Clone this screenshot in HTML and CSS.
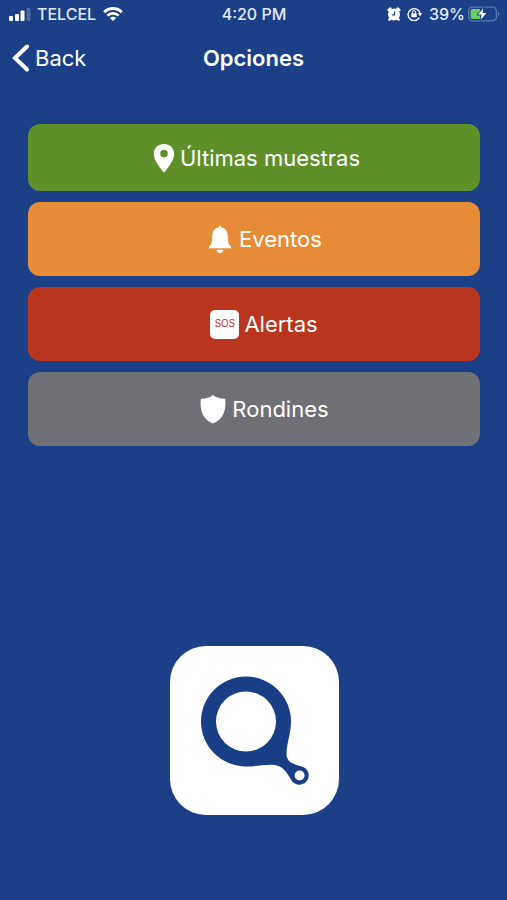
FILE: index.html
```html
<!DOCTYPE html>
<html lang="es">
<head>
<meta charset="utf-8">
<meta name="viewport" content="width=device-width, initial-scale=1">
<title>Opciones</title>
<link rel="stylesheet" href="styles.css">
</head>
<body>
<div class="status">
  <div class="status-side">
    <svg viewBox="0 0 24 14" width="24" height="14" aria-hidden="true">
      <rect x="1" y="9" width="4" height="5" rx="1"/>
      <rect x="7" y="7" width="4" height="7" rx="1"/>
      <rect x="12.500" y="3.500" width="4" height="10.500" rx="1"/>
      <rect x="18.500" y="1" width="4" height="13" rx="1" opacity=".22"/>
    </svg>
    <span>TELCEL</span>
    <svg class="wifi" viewBox="0 0 20 14" width="20" height="14" aria-hidden="true">
      <path d="M1.200 5.200a12.400 12.400 0 0 1 17.600 0" fill="none" stroke="#fff" stroke-width="2.900"/>
      <path d="M4.400 8.700a7.900 7.900 0 0 1 11.200 0" fill="none" stroke="#fff" stroke-width="2.600"/>
      <path d="M10 14 6.900 11a4.400 4.400 0 0 1 6.200 0z"/>
    </svg>
  </div>
  <span>4:20 PM</span>
  <div class="status-side status-end">
    <svg viewBox="0 0 14 14" width="14" height="14" aria-hidden="true">
      <circle cx="7" cy="7.400" r="6"/>
      <path d="M1.800 3 3.300 1.600M12.200 3 10.700 1.600M2.400 12.600l1.500-1.500M11.600 12.600l-1.500-1.500" stroke="#fff" stroke-width="2.600" stroke-linecap="round"/>
      <path d="M7.500 4.300v3.600H4.800" fill="none" stroke="#1b4087" stroke-width="1.100"/>
    </svg>
    <svg class="lock" viewBox="0 0 16 14" width="16" height="14" aria-hidden="true">
      <path d="M12.300 10.700A6 6 0 1 1 13 6.400" fill="none" stroke="#fff" stroke-width="1.400"/>
      <path d="M10.800 6h4.400L13 9.400z"/>
      <rect x="4.300" y="6.300" width="5.400" height="4" rx=".6"/>
      <path d="M5.400 6.600V5.200a1.600 1.600 0 0 1 3.200 0v1.400" fill="none" stroke="#fff"/>
    </svg>
    <span>39%</span>
    <svg viewBox="0 0 32 16" width="32" height="16" aria-hidden="true">
      <rect x=".6" y="1.100" width="27.800" height="13.800" rx="4" fill="none" stroke="#5c78ae" stroke-width="1.200"/>
      <path d="M30 5.800c2 .8 2 3.600 0 4.400z" fill="#5c78ae"/>
      <path d="M4.500 3H12v10H4.500a2 2 0 0 1-2-2V5a2 2 0 0 1 2-2z" fill="#66cf62"/>
      <path d="M16 1 9 9h4l-1 6 7.500-8.500h-4.300z" stroke="#1b4087"/>
    </svg>
  </div>
</div>
<header class="nav">
  <a class="back" href="#">
    <svg viewBox="0 0 17 30" width="17" height="30" aria-hidden="true"><path d="M15 3.500 3 15l12 11.500" fill="none" stroke="#fff" stroke-width="4" stroke-linecap="round"/></svg>
    <span>Back</span>
  </a>
  <h1>Opciones</h1>
</header>
<main>
  <div class="options">
    <button class="option samples" type="button">
      <svg viewBox="0 0 22 30" width="22" height="30" aria-hidden="true"><path fill-rule="evenodd" d="M11 1C5.200 1 .8 5.200.8 10.800.8 18 7 24 9.600 28.300q1.400 2 2.800 0C15 24 21.200 18 21.200 10.800 21.200 5.200 16.800 1 11 1zm0 5.800a3.800 3.800 0 1 1 0 7.600 3.800 3.800 0 0 1 0-7.600z"/></svg>
      <span>Últimas muestras</span>
    </button>
    <button class="option events" type="button">
      <svg viewBox="0 0 28 30" width="28" height="30" aria-hidden="true"><path d="M13 3.200C13.300.5 14.700.5 15 3.200c4.500.8 6.800 4.400 6.800 8.800 0 6.400.7 8.600 3.200 10.500v1.700H3v-1.700C5.500 20.600 6.200 18.400 6.200 12c0-4.400 2.300-8 6.800-8.800zM10.500 25.800h7c-.5 4.200-6.500 4.200-7 0z"/></svg>
      <span>Eventos</span>
    </button>
    <button class="option alerts" type="button">
      <span class="sos">SOS</span>
      <span>Alertas</span>
    </button>
    <button class="option rounds" type="button">
      <svg viewBox="0 0 28 30" width="28" height="30" aria-hidden="true"><path d="M14 1c3 2.800 7 3.600 11.500 3.800q.8 0 .8 1C27 16.500 24.500 25.500 14 29.500 3.500 25.500 1 16.500 1.700 5.800q0-1 .8-1C7 4.600 11 3.800 14 1z"/></svg>
      <span>Rondines</span>
    </button>
  </div>
  <svg class="logo" viewBox="0 0 169 169" role="img" aria-label="Logo">
    <rect width="169" height="169" rx="36"/>
    <path fill="#183f86" fill-rule="evenodd" d="M76 120.500A45 45 0 1 1 121 75.500C121 87 117 96 116.500 107.500C116.400 117 125 118.500 132 120.500A9.300 9.300 0 1 1 121 133.500C117 127 113 118.900 102 118.700C92 118.500 86 120.500 76 120.500zM76 45.500a30 30 0 1 0 0 60 30 30 0 0 0 0-60zM129.600 124.500a5 5 0 1 0 0 10 5 5 0 0 0 0-10z"/>
  </svg>
</main>
</body>
</html>
```
FILE: styles.css
```css
* {
  box-sizing: border-box;
}

body {
  margin: 0;
  min-height: 100vh;
  background: #1b4087;
  color: #fff;
  font-family: Inter, "Liberation Sans", sans-serif;
}

svg {
  display: block;
  flex: none;
  fill: #fff;
}

.status {
  display: grid;
  grid-template-columns: 1fr auto 1fr;
  align-items: center;
  height: 28px;
  padding: 0 7px 0 8px;
  font-size: 16px;
  font-weight: 500;
  line-height: 20px;
  color: #e4eaf5;
}

.status-side {
  display: flex;
  align-items: center;
  gap: 5px;
}

.wifi {
  margin-left: 2px;
}

.status-end {
  justify-content: flex-end;
  gap: 3px;
}

.lock {
  margin: 0 3px;
}

.nav {
  display: grid;
  grid-template-columns: 1fr auto 1fr;
  align-items: center;
  height: 60px;
  padding: 0 12px;
}

.back {
  display: flex;
  align-items: center;
  gap: 6px;
  color: inherit;
  font-size: 22px;
  text-decoration: none;
}

h1 {
  margin: 0;
  font-size: 22px;
  font-weight: 600;
}

main {
  display: flex;
  flex-direction: column;
  align-items: center;
  gap: 200px;
  padding: 36px 27px 40px 28px;
}

.options {
  display: flex;
  flex-direction: column;
  gap: 11px;
  width: 100%;
}

.option {
  display: flex;
  align-items: center;
  justify-content: center;
  gap: 5px;
  min-height: 74px;
  padding: 0 0 0 20px;
  border: 0;
  border-radius: 12px;
  color: #fff;
  font: 400 22px/28px Inter, "Liberation Sans", sans-serif;
}

.samples {
  min-height: 67px;
  padding-left: 5px;
  background: #5f8f29;
}

.events {
  background: #e78c36;
}

.alerts {
  background: #ba351d;
}

.rounds {
  background: #707176;
}

.sos {
  width: 29px;
  height: 29px;
  border-radius: 5px;
  background: #fff;
  color: #ba351d;
  font-size: 10px;
  line-height: 27px;
  text-align: center;
}

.logo {
  width: 169px;
  height: 169px;
}
```
